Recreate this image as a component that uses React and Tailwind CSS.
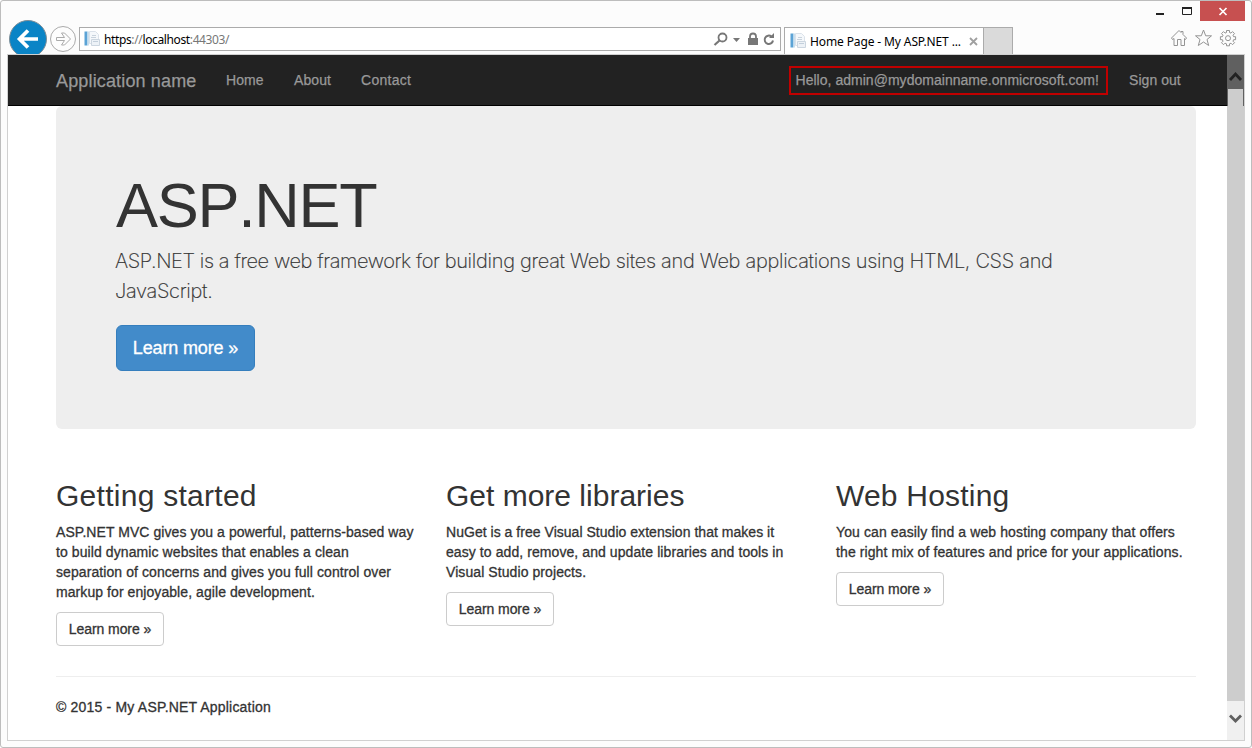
import React from 'react';

const columns = [
  {
    title: 'Getting started',
    titleSpacing: 'tracking-[0.27px]',
    lines: [
      ['ASP.NET MVC gives you a powerful, patterns-based way', 'tracking-[0.06px]'],
      ['to build dynamic websites that enables a clean', 'tracking-[0.09px]'],
      ['separation of concerns and gives you full control over', 'tracking-[0.08px]'],
      ['markup for enjoyable, agile development.', 'tracking-[0.07px]'],
    ],
  },
  {
    title: 'Get more libraries',
    titleSpacing: 'tracking-normal',
    lines: [
      ['NuGet is a free Visual Studio extension that makes it', 'tracking-[0.03px]'],
      ['easy to add, remove, and update libraries and tools in', 'tracking-[0.08px]'],
      ['Visual Studio projects.', 'tracking-[0.08px]'],
    ],
  },
  {
    title: 'Web Hosting',
    titleSpacing: 'tracking-[0.2px]',
    lines: [
      ['You can easily find a web hosting company that offers', 'tracking-[0.11px]'],
      ['the right mix of features and price for your applications.', 'tracking-[0.1px]'],
    ],
  },
];

function PageIcon() {
  return (
    <svg width="16" height="16" viewBox="0 0 16 16" className="shrink-0">
      <rect x="0.5" y="0.5" width="3" height="14" fill="#5ba3d6" />
      <rect x="3.500" y="0.5" width="1.500" height="14" fill="#c9dfee" />
      <path d="M5.500 .5h6l3 3v9h-9z" fill="#f5f8fb" stroke="#dbe2ea" />
      <path d="M8 4.500h4M7 6.500h5" stroke="#c9d3dd" />
      <path d="M7.500 8.500h8v6h-8z" fill="#edf2f7" stroke="#ccd6e0" />
      <path d="M9 10.500h5" stroke="#c3cfdb" />
    </svg>
  );
}

function Chrome() {
  return (
    <header className="relative flex h-[53px] shrink-0 pl-[7px] font-['Noto_Sans',sans-serif] text-[12px]">
      <svg width="72" height="53" className="shrink-0">
        <circle cx="20" cy="38" r="18.500" fill="#0a84c6" stroke="#7d8d97" />
        <path d="M11.500 38h18.500M20 29.500l-8.500 8.500 8.500 8.500" fill="none" stroke="#fff" strokeWidth="3.700" />
        <circle cx="55" cy="38" r="12.500" fill="#fdfdfd" stroke="#ababab" />
        <path d="M48.500 36.500h8l-3-4.500h3l6 6-6 6h-3l3-4.500h-8z" fill="none" stroke="#ababab" />
      </svg>
      <div className="mt-[26px] -ml-px flex h-6 w-[702px] shrink-0 items-center border border-[#ababab] bg-white pl-1">
        <PageIcon />
        <p className="ml-[4px] pt-[2px] tracking-[-0.37px] whitespace-nowrap text-[#777]">
          <span className="text-black">https</span>://<span className="text-black">localhost</span>:44303/
        </p>
        <svg width="67" height="22" className="ml-auto shrink-0">
          <circle cx="9.500" cy="9.500" r="4" fill="none" stroke="#777" strokeWidth="1.800" />
          <path d="M6.500 12.500l-5 4.500" stroke="#777" strokeWidth="2.200" />
          <path d="M20 10h7l-3.500 4z" fill="#777" />
          <path d="M35 10h10v7H35z" fill="#777" />
          <path d="M37 10V8.500a3 3 0 0 1 6 0V10" fill="none" stroke="#777" strokeWidth="1.800" />
          <path d="M58.500 8.500A4.200 4.200 0 1 0 60 12.500" fill="none" stroke="#777" strokeWidth="2" />
          <path d="M56 10h5V5z" fill="#777" />
        </svg>
      </div>
      <div className="mt-[26px] ml-[3px] flex h-[27px] w-[200px] shrink-0 items-center border border-b-0 border-[#ababab] bg-white pl-[5px] text-black">
        <PageIcon />
        <span className="ml-[4px] pt-[2px] tracking-[-0.12px] whitespace-nowrap">Home Page - My ASP.NET ...</span>
        <svg width="9" height="9" className="mr-[5px] ml-auto shrink-0">
          <path d="M1 1l7 7M8 1l-7 7" stroke="#a0a0a0" strokeWidth="1.800" />
        </svg>
      </div>
      <div className="mt-[26px] h-[27px] w-[29px] shrink-0 border border-b-0 border-l-0 border-[#ababab] bg-[#dadada]" />
      <div className="absolute top-0 right-[6px] flex h-5">
        <svg width="50" height="20">
          <path d="M6 12h8v2H6z" fill="#222" />
          <path d="M32.500 7v6.500h9V7z" fill="none" stroke="#222" />
          <path d="M32 6h10v2H32z" fill="#222" />
        </svg>
        <div className="h-5 w-[45px] bg-[#c75050]">
          <svg width="45" height="20">
            <path d="M19.500 7l7 7M26.500 7l-7 7" stroke="#fff" strokeWidth="1.700" />
          </svg>
        </div>
      </div>
      <svg width="70" height="20" className="absolute top-[27px] right-[11px]" fill="none" stroke="#949494">
        <path d="M1.500 10L9 2.500 11 4.500V3.500h2V6.500L16.500 10 15.500 11.500 14.500 10.500V17.500H11V11.500H7.500V17.500H4V10.500L2.500 11.500z" />
        <path d="M33.500 2L35.700 7.800H41.500L37 11.500 38.700 17.500 33.500 14 28.300 17.500 30 11.500 25.500 7.800H31.300z" />
        <path d="M56.500 2.500h3v2l1.500.6 1.500-1.500 2 2L63 7.200l.6 1.500h2v3h-2L63 13.200l1.500 1.500-2 2L61 15.200l-1.500.6v2h-3v-2L55 15.200l-1.500 1.500-2-2L53 13.200l-.6-1.500h-2v-3h2L53 7.200 51.500 5.600l2-2L55 5.100l1.500-.6z" />
        <circle cx="58" cy="10.200" r="2.500" />
      </svg>
    </header>
  );
}

function NavBar() {
  return (
    <nav className="flex h-[51px] items-center border-b border-black bg-[#222] pl-12 text-[14px] leading-5 whitespace-nowrap text-[#999] [-webkit-text-stroke:0.25px_#999]">
      <a className="w-[170px] pt-px text-[18px] tracking-[0.15px]">Application name</a>
      <a className="w-[68px] tracking-[0.1px]">Home</a>
      <a className="w-[67px] tracking-[0.1px]">About</a>
      <a className="tracking-[0.28px]">Contact</a>
      <a className="ml-auto flex h-[29px] w-[319px] items-center border-2 border-[#c00000] pl-[4.5px] tracking-[0.03px]">
        Hello, admin@mydomainname.onmicrosoft.com!
      </a>
      <a className="mr-[46px] ml-[21px] w-[52px] tracking-[0.05px]">Sign out</a>
    </nav>
  );
}

function ScrollBar() {
  return (
    <div className="flex w-[17px] shrink-0 flex-col bg-[#f0f0f0]">
      <div className="h-[34px] bg-[#606060]">
        <svg width="17" height="34"><path d="M3 25L8.500 19l5.500 6" fill="none" stroke="#222" strokeWidth="2.800" /></svg>
      </div>
      <div className="h-[17px] border-x border-[#606060] bg-[#cdcdcd]" />
      <div className="flex-1 bg-[#cdcdcd]" />
      <div className="h-[39px]">
        <svg width="17" height="39"><path d="M3 14.500L8.500 20l5.500-5.500" fill="none" stroke="#606060" strokeWidth="2.800" /></svg>
      </div>
    </div>
  );
}

export default function App() {
  return (
    <div className="flex h-[748px] w-[1252px] flex-col overflow-hidden rounded-[3px] border border-[#bdbdbd] bg-[#fcfcfc] font-['Liberation_Sans',Arial,sans-serif] text-[#333]">
      <Chrome />
      <div className="mx-1.5 flex h-[687px] shrink-0 border border-[#d0d0d0] bg-white">
        <main className="min-w-0 flex-1">
          <NavBar />
          <div className="pr-[31px] pl-12">
            <section className="h-[323px] rounded-md bg-[#eee] px-[60px] pt-[68px]">
              <h1 className="text-[63px] leading-[63px] tracking-[-1.3px] whitespace-nowrap [font-kerning:none]">ASP.NET</h1>
              <p className="mt-[9px] -ml-px font-['Inter',sans-serif] text-[20px] leading-[30px] font-extralight whitespace-nowrap [-webkit-text-stroke:0.2px_#333]">
                <span className="tracking-[-0.4px]">ASP.NET is a free web framework for </span>
                <span className="tracking-[-0.3px]">building great Web sites and Web applications using HTML, CSS and</span>
                <br />
                <span className="tracking-[-0.3px]">JavaScript.</span>
              </p>
              <button className="mt-[19px] h-[46px] w-[139px] rounded-md border border-[#357ebd] bg-[#428bca] text-[18px] tracking-[-0.15px] text-white [-webkit-text-stroke:0.3px_#fff]">Learn more »</button>
            </section>
            <section className="flex h-[248px] gap-[30px] border-b border-[#eee] pt-[50px]">
              {columns.map((c) => (
                <article key={c.title} className="w-[360px]">
                  <h2 className={`text-[30px] leading-[33px] whitespace-nowrap ${c.titleSpacing}`}>{c.title}</h2>
                  <p className="mt-[10px] text-[14px] leading-5 whitespace-nowrap [-webkit-text-stroke:0.3px_#333]">
                    {c.lines.map(([text, spacing]) => (
                      <span key={text} className={`block w-fit ${spacing}`}>{text}</span>
                    ))}
                  </p>
                  <button className="mt-[10px] h-[34px] w-[108px] rounded border border-[#ccc] bg-white text-[14px] tracking-[-0.08px] whitespace-nowrap [-webkit-text-stroke:0.3px_#333]">Learn more »</button>
                </article>
              ))}
            </section>
            <footer className="pt-5 text-[14px] leading-5 tracking-[0.19px] [-webkit-text-stroke:0.3px_#333]"><span>© 2015 - My ASP.NET Application</span></footer>
          </div>
        </main>
        <ScrollBar />
      </div>
    </div>
  );
}
